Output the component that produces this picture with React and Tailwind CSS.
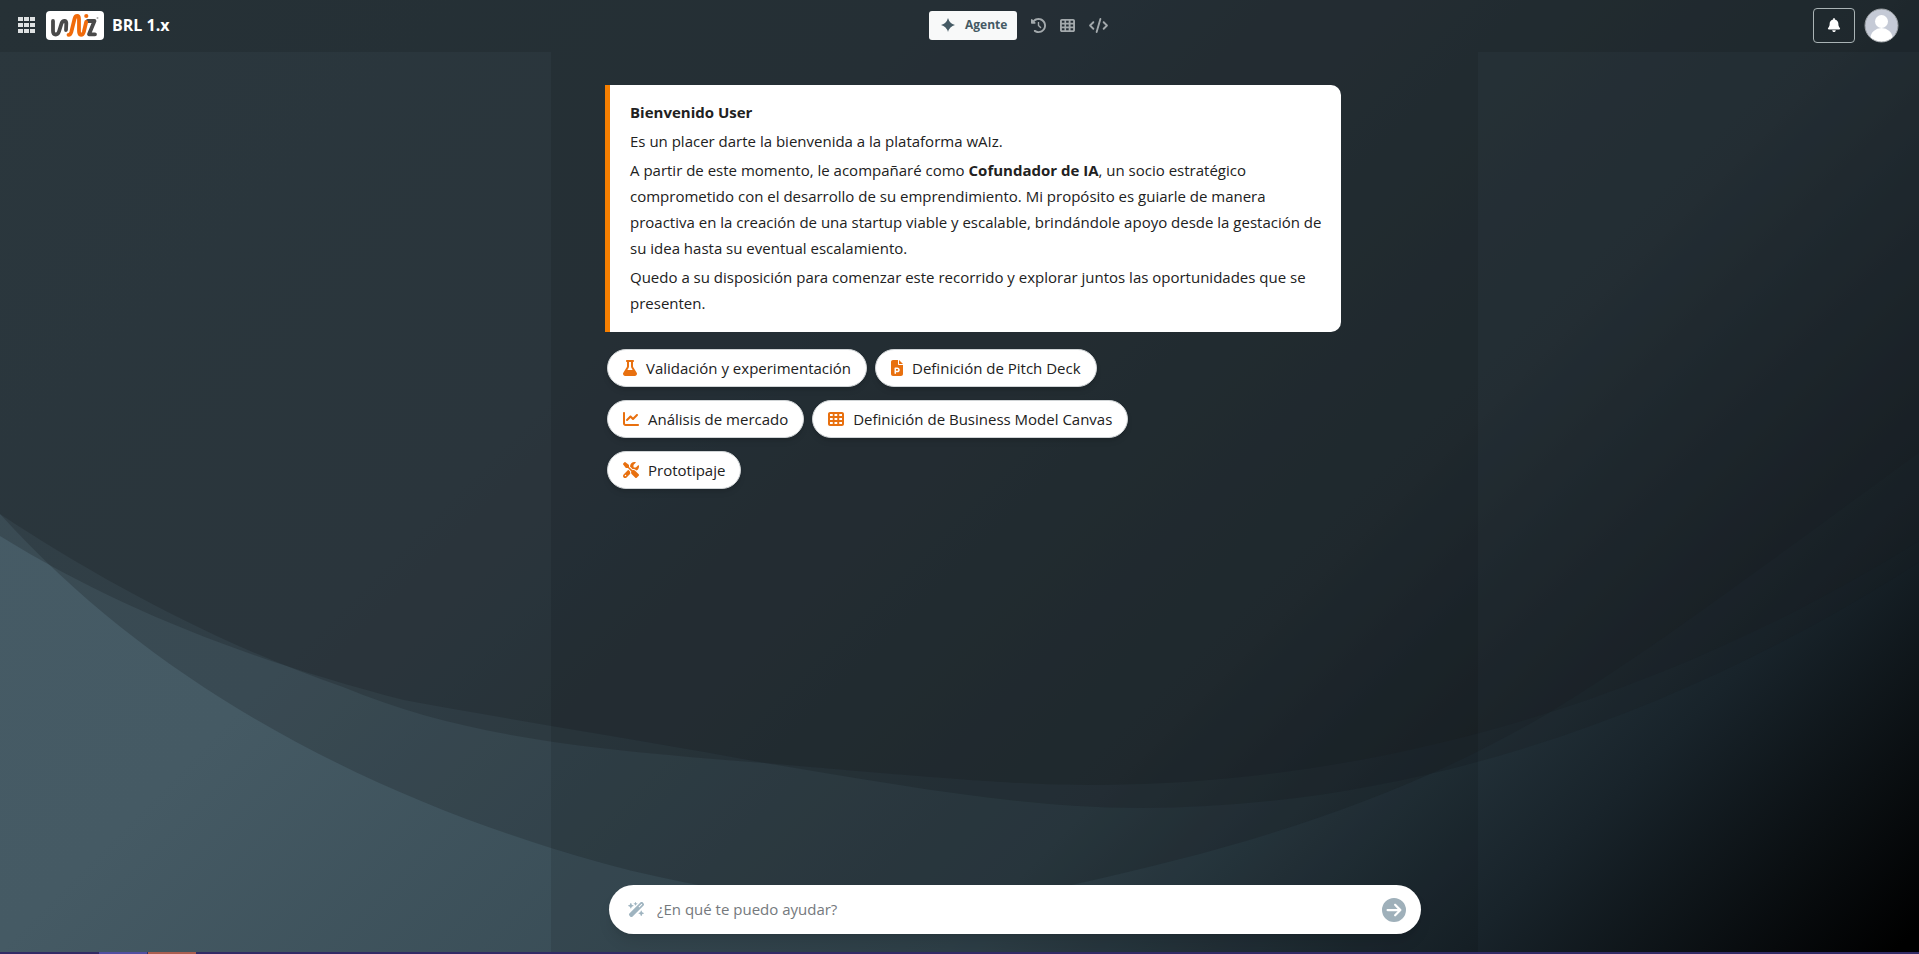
import React from "react";
import {
  FaBell,
  FaChartLine,
  FaCircleArrowRight,
  FaClockRotateLeft,
  FaCode,
  FaFilePowerpoint,
  FaFlask,
  FaScrewdriverWrench,
  FaTableCells,
  FaWandMagicSparkles,
} from "react-icons/fa6";

const suggestions = [
  { label: "Validación y experimentación", icon: FaFlask, width: "w-[14px]" },
  { label: "Definición de Pitch Deck", icon: FaFilePowerpoint, width: "w-3" },
  { label: "Análisis de mercado", icon: FaChartLine, width: "w-4" },
  { label: "Definición de Business Model Canvas", icon: FaTableCells, width: "w-4" },
  { label: "Prototipaje", icon: FaScrewdriverWrench, width: "w-4" },
];

const tools = [
  { label: "Historial", icon: FaClockRotateLeft, width: "w-[15px]" },
  { label: "Tablero", icon: FaTableCells, width: "w-[15px]" },
  { label: "Código", icon: FaCode, width: "w-[19px]" },
];

function Backdrop() {
  return (
    <svg
      className="absolute inset-0 -z-10 h-full w-full"
      viewBox="0 0 1919 954"
      preserveAspectRatio="none"
      aria-hidden="true"
    >
      <defs>
        <linearGradient id="base" gradientUnits="userSpaceOnUse" x1="241" y1="-241" x2="1678" y2="1196">
          <stop offset="0" stopColor="#475c67" />
          <stop offset="0.33" stopColor="#455a64" />
          <stop offset="0.66" stopColor="#33464f" />
          <stop offset="0.84" stopColor="#18232a" />
          <stop offset="0.99" stopColor="#000" />
        </linearGradient>
      </defs>
      <rect width="1919" height="954" fill="url(#base)" />
      <g fill="#191d20" fillOpacity="0.25">
        <path d="M0 0V514C150 680 350 785 551 848C730 905 920 920 1076 884C1250 845 1400 800 1547 714C1680 632 1790 545 1919 453V0Z" />
        <path d="M0 0V514C100 580 220 645 343 687C460 735 570 748 765 763C960 780 1020 785 1101 785C1400 782 1680 690 1919 541V0Z" />
        <path d="M0 0V536C120 610 250 660 404 700C540 725 660 743 765 763C900 785 1020 808 1140 808C1420 808 1690 710 1919 562V0Z" />
      </g>
    </svg>
  );
}

function Logo() {
  return (
    <svg className="h-[29px] w-[58px] rounded bg-white" viewBox="0 0 58 29" role="img" aria-label="wAIz">
      <g fill="none" strokeWidth="3.8" strokeLinecap="round" strokeLinejoin="round">
        <path d="M7 10V20Q7 23.500 9.800 23.500Q12 23.500 13 20.500L15.500 12.500Q16.300 10 18.500 10Q20.500 10 20.300 12.500L20 19" stroke="#4a4a4a" />
        <path d="M41.700 10H48.500L43 23.300H49" stroke="#4a4a4a" />
        <path d="M22.500 23.800Q24.500 23.800 25.300 21L28.500 8Q29.200 5 31.200 5Q33 5 33 8V20Q33 23.800 35 23.800Q37 23.800 37.800 21L40.200 11" stroke="#f06a0a" />
      </g>
      <circle cx="40.300" cy="5" r="2.100" fill="#f06a0a" />
      <circle cx="51.500" cy="7" r="1" fill="#aaa" />
    </svg>
  );
}

function Header() {
  return (
    <header className="grid h-[52px] grid-cols-3 items-center bg-black/10 pr-5 pb-[2px] pl-[18px]">
      <div className="flex items-center">
        <button type="button" aria-label="Aplicaciones" className="mr-[11px] text-[#dee1e2]">
          <svg className="h-[17px] w-[17px]" viewBox="0 0 17 17" fill="currentColor">
            <path d="M0 0h5v4H0zM6 0h5v4H6zM12 0h5v4h-5zM0 6h5v4H0zM6 6h5v4H6zM12 6h5v4h-5zM0 12h5v4H0zM6 12h5v4H6zM12 12h5v4h-5z" />
          </svg>
        </button>
        <a href="#" className="flex items-center gap-2">
          <Logo />
          <span className="text-base font-bold text-white">BRL 1.x</span>
        </a>
      </div>
      <nav className="ml-[284px] flex items-center gap-[14px] text-[#a3a9ac]">
        <button
          type="button"
          className="flex h-[29px] w-[88px] items-center gap-[10px] rounded-[3px] bg-[#f8f9f9] pl-3 text-xs font-bold text-[#455a64]"
        >
          <svg className="h-[14px] w-[14px]" viewBox="0 0 14 14" fill="currentColor" aria-hidden="true">
            <path d="M7 0Q8.500 5.500 14 7Q8.500 8.500 7 14Q5.500 8.500 0 7Q5.500 5.500 7 0Z" />
          </svg>
          Agente
        </button>
        {tools.map(({ label, icon: Icon, width }) => (
          <button key={label} type="button" aria-label={label}>
            <Icon className={`h-[15px] ${width}`} />
          </button>
        ))}
      </nav>
      <div className="flex items-center justify-end gap-[9px]">
        <button
          type="button"
          aria-label="Notificaciones"
          className="flex h-[35px] w-[42px] items-center justify-center rounded border border-[#a9b3b5] text-white"
        >
          <FaBell size={14} />
        </button>
        <button type="button" aria-label="Perfil">
          <svg className="h-[35px] w-[35px]" viewBox="0 0 35 35">
            <clipPath id="avatar">
              <circle cx="17.500" cy="17.500" r="16.500" />
            </clipPath>
            <circle cx="17.500" cy="17.500" r="16.500" fill="#c5cad6" />
            <g fill="#fff" clipPath="url(#avatar)">
              <circle cx="17.500" cy="13.500" r="6.500" />
              <ellipse cx="17.500" cy="30" rx="11" ry="10" />
            </g>
            <circle cx="17.500" cy="17.500" r="16.500" fill="none" stroke="#9a9fa3" />
          </svg>
        </button>
      </div>
    </header>
  );
}

function Welcome() {
  return (
    <section className="mr-20 ml-[-4px] flex flex-col gap-[3px] rounded-r-[10px] border-l-[5px] border-[#f77f00] bg-white pt-[14px] pr-4 pb-4 pl-5 text-[15px] leading-[26px] text-[#212121]">
      <h1 className="font-bold">Bienvenido User</h1>
      <p>Es un placer darte la bienvenida a la plataforma wAIz.</p>
      <p>
        A partir de este momento, le acompañaré como <strong>Cofundador de IA</strong>, un socio
        estratégico comprometido con el desarrollo de su emprendimiento. Mi propósito es guiarle de
        manera proactiva en la creación de una startup viable y escalable, brindándole apoyo desde la
        gestación de su idea hasta su eventual escalamiento.
      </p>
      <p>
        Quedo a su disposición para comenzar este recorrido y explorar juntos las oportunidades que
        se presenten.
      </p>
    </section>
  );
}

function Suggestions() {
  return (
    <div className="mt-[17px] ml-[-2px] flex max-w-[600px] flex-wrap gap-x-2 gap-y-[13px]">
      {suggestions.map(({ label, icon: Icon, width }) => (
        <button
          key={label}
          type="button"
          className="flex h-[38px] items-center gap-[9px] rounded-full border border-[#d0d4d6] bg-white px-[15px] text-[15px] text-[#212121] shadow-md"
        >
          <Icon className={`h-4 text-[#e8700f] ${width}`} />
          {label}
        </button>
      ))}
    </div>
  );
}

function Prompt() {
  return (
    <form
      className="mt-auto mb-[18px] flex h-[49px] items-center rounded-full bg-white pr-[15px] pl-[19px] shadow-lg"
      onSubmit={(e) => e.preventDefault()}
    >
      <FaWandMagicSparkles size={17} className="text-[#9fb4c0]" />
      <input
        type="text"
        aria-label="Mensaje"
        placeholder="¿En qué te puedo ayudar?"
        className="ml-3 flex-1 text-[15px] text-[#212121] outline-none placeholder:text-[#75797d]"
      />
      <button type="submit" aria-label="Enviar">
        <FaCircleArrowRight size={24} className="text-[#9fb0ba]" />
      </button>
    </form>
  );
}

export default function App() {
  return (
    <div className="relative isolate flex min-h-screen flex-col overflow-hidden font-['Open_Sans',sans-serif]">
      <Backdrop />
      <Header />
      <main className="mr-[23%] ml-[551px] flex flex-1 flex-col bg-black/10 pt-[33px] pr-[57px] pl-[58px]">
        <Welcome />
        <Suggestions />
        <Prompt />
      </main>
      <footer className="flex h-[2px] bg-[#332b66] pl-[99px]">
        <span className="mr-px w-12 bg-[#524fa1]" />
        <span className="w-12 bg-[#ac5e50]" />
      </footer>
    </div>
  );
}
